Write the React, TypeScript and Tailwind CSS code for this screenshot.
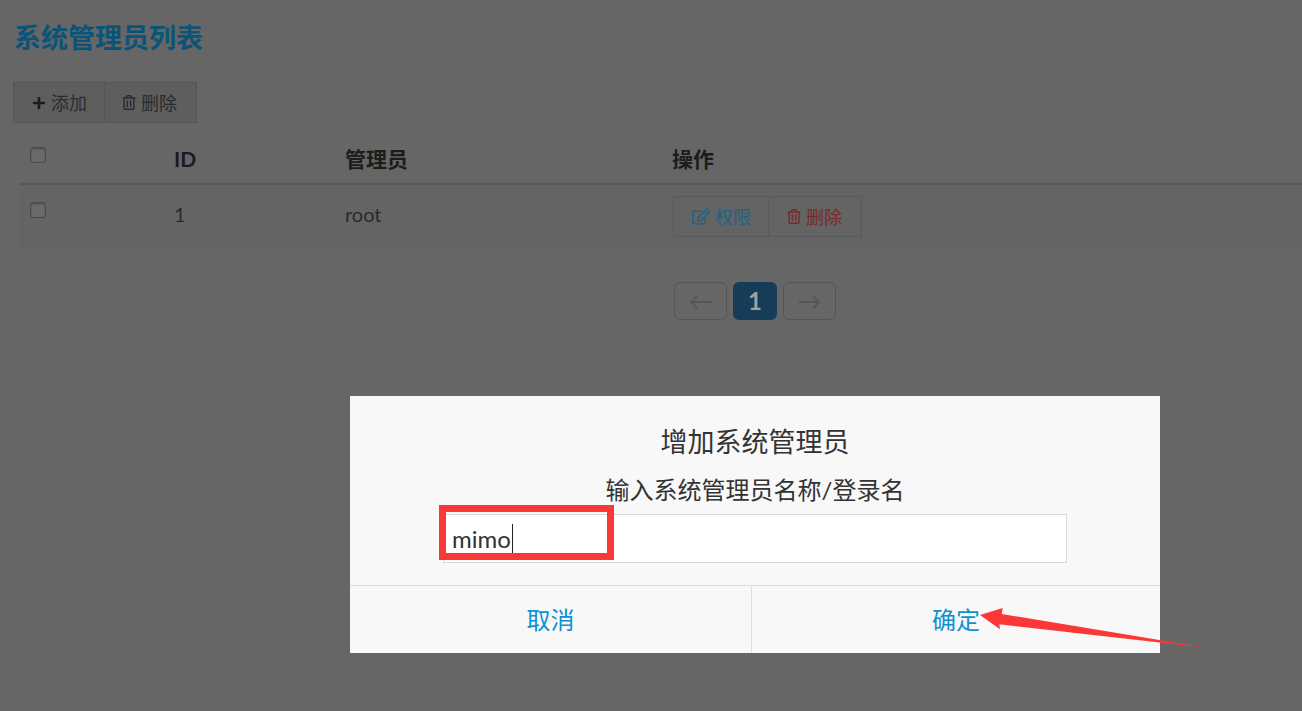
import { FaPlus, FaRegEdit, FaRegTrashAlt } from "react-icons/fa";

const font = "font-['Lato','Noto_Sans_CJK_SC',sans-serif]";

const Check = () => (
  <input
    type="checkbox"
    readOnly
    className="block h-4 w-4 appearance-none rounded-[3px] border border-[#4a4a4a] bg-[#6a6a6a] shadow-[inset_0_1px_2px_rgba(0,0,0,0.3)]"
  />
);

const App = () => {
  return (
    <div className={`${font} relative h-[711px] w-[1302px] overflow-hidden bg-[#666666] text-[#2a2a2a]`}>
      <div className="pt-[22px] pl-[13px]">
        <h1 className="pl-px text-[27px] leading-[32px] font-bold text-[#0b5478]">系统管理员列表</h1>

        <div className="mt-[28px] flex h-[41px] w-[184px] text-[18px] leading-none text-[#2b2b2b]">
          <div className="flex w-[92px] items-center gap-[5px] border border-[#555555] bg-[#5e5e5e] pl-[18px]">
            <FaPlus className="h-[14px] w-[14px] text-[#1c1c1c]" />
            <span>添加</span>
          </div>
          <div className="flex w-[92px] items-center gap-[5px] border border-l-0 border-[#555555] bg-[#5e5e5e] pl-[17px]">
            <FaRegTrashAlt className="h-[15px] w-[14px]" />
            <span>删除</span>
          </div>
        </div>

        <div className="ml-[7px] w-[1282px]">
          <div className="grid h-[62px] grid-cols-[154px_171px_327px_1fr] border-b-2 border-[#585858] text-[21px] font-bold text-[#1c1c1c]">
            <div className="pt-[24px] pl-[10px]">
              <Check />
            </div>
            <div className="pt-[21px] leading-[30px]">ID</div>
            <div className="pt-[21px] leading-[30px]">管理员</div>
            <div className="pt-[21px] leading-[30px]">操作</div>
          </div>
          <div className="grid h-[63px] grid-cols-[154px_171px_327px_1fr] bg-[#646464] text-[20px]">
            <div className="pt-[17px] pl-[10px]">
              <Check />
            </div>
            <div className="pt-[14px] leading-[30px]">1</div>
            <div className="pt-[14px] leading-[30px]">root</div>
            <div className="pt-[11px]">
              <div className="ml-px flex h-[41px] w-[189px] text-[18px] leading-none">
                <div className="flex w-[96px] items-center gap-[5px] border border-[#5a5a5a] pl-[18px] text-[#1f6388]">
                  <FaRegEdit className="h-[17px] w-[18px]" />
                  <span>权限</span>
                </div>
                <div className="flex w-[93px] items-center gap-[5px] border border-l-0 border-[#5a5a5a] pl-[18px] text-[#7a2a28]">
                  <FaRegTrashAlt className="h-[15px] w-[14px]" />
                  <span>删除</span>
                </div>
              </div>
            </div>
          </div>
        </div>

        <div className="mt-[34px] ml-[661px] flex gap-[6px] text-[24px] leading-none">
          <div className="flex h-[38px] w-[53px] items-center justify-center rounded-[6px] border border-[#555555] text-[#555555]">←</div>
          <div className="flex h-[38px] w-[44px] items-center justify-center rounded-[6px] bg-[#173c58] font-bold text-[#a0a0a0]">1</div>
          <div className="flex h-[38px] w-[53px] items-center justify-center rounded-[6px] border border-[#555555] text-[#555555]">→</div>
        </div>
      </div>

      {/* modal */}
      <div className="absolute top-[396px] left-[350px] w-[810px] bg-[#f8f8f8] text-[#333333]">
        <div className="h-[190px] border-b border-[#dedede] text-center">
          <div className="pt-[28px] text-[27px] leading-[36px]">增加系统管理员</div>
          <div className="mt-[12px] text-[24px] leading-[36px]">输入系统管理员名称/登录名</div>
          <div className="mx-auto mt-[6px] flex h-[49px] w-[624px] items-center border border-[#d8d8d8] bg-white pl-[8px] text-left text-[24px]">
            <span>mimo</span>
            <span className="ml-px h-[30px] w-px bg-[#222222]" />
          </div>
        </div>
        <div className="grid h-[67px] grid-cols-[402px_1fr] text-[24px] text-[#0e90d2]">
          <div className="flex items-center justify-center border-r border-[#dedede]">取消</div>
          <div className="flex items-center justify-center">确定</div>
        </div>
      </div>

      {/* annotations */}
      <div className="absolute top-[505px] left-[439px] h-[55px] w-[175px] border-[7px] border-[#fb3737]" />
      <svg className="absolute top-0 left-0" width="1302" height="711">
        <polygon points="980,615 1002.7,608 1001.7,614 1206,647.7 999.3,624.3 1000,629.3" fill="#fb3737" />
      </svg>
    </div>
  );
};

export default App;
